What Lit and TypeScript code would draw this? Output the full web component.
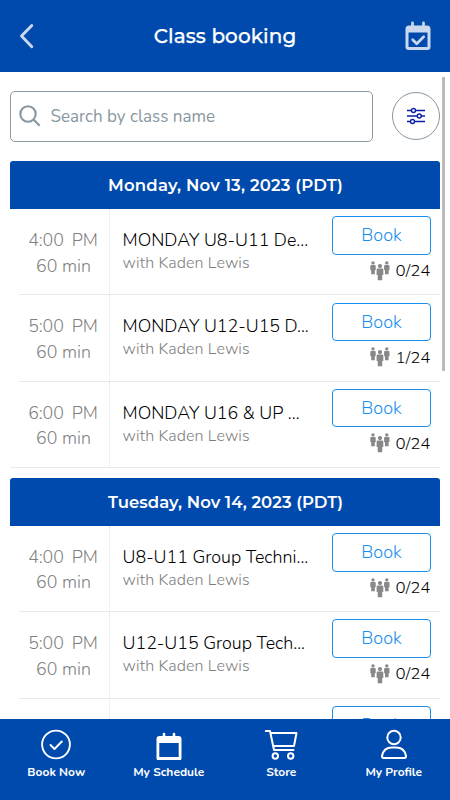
import { LitElement, html, css, svg, nothing } from "lit";
import { customElement } from "lit/decorators.js";

interface ClassSlot { time: string; name: string; spots: string }
interface Day { title: string; cls: string; slots: ClassSlot[]; more?: boolean }

const days: Day[] = [
  {
    title: "Monday, Nov 13, 2023 (PDT)",
    cls: "d1",
    slots: [
      { time: "4:00", name: "MONDAY U8-U11 De...", spots: "0/24" },
      { time: "5:00", name: "MONDAY U12-U15 D...", spots: "1/24" },
      { time: "6:00", name: "MONDAY U16 & UP ...", spots: "0/24" },
    ],
  },
  {
    title: "Tuesday, Nov 14, 2023 (PDT)",
    cls: "d2",
    slots: [
      { time: "4:00", name: "U8-U11 Group Techni...", spots: "0/24" },
      { time: "5:00", name: "U12-U15 Group Tech...", spots: "0/24" },
    ],
    more: true,
  },
];

const person = (x: number, y: number, s: number) => svg`
  <g transform="translate(${x} ${y}) scale(${s})">
    <circle cx="3" cy="1.9" r="1.9"></circle>
    <path d="M1 4.200h4q1 0 1 1v4.200q0 .6-.5.6T5 9.400V14.500H1V9.400q0 .6-.5.6T0 9.400V5.200q0-1 1-1z"></path>
  </g>`;

const people = html`<svg class="people" viewBox="0 0 20 20" width="20" height="20" fill="#888">
  ${person(0.3, 0.2, 0.9)}${person(14.1, 0.2, 0.9)}${person(6.6, 2.9, 1.12)}
</svg>`;

@customElement("app-root")
export class AppRoot extends LitElement {
  static styles = css`
    :host { display: flex; flex-direction: column; width: 450px; height: 800px; overflow: hidden; background: #fff; font-family: Nunito, "Open Sans", sans-serif; font-weight: 300; color: #111; }
    * { box-sizing: border-box; }
    svg { display: block; flex: none; }
    span, div { white-space: nowrap; }
    .top { height: 72px; flex: none; background: #004aad; display: flex; align-items: center; justify-content: space-between; padding: 0 18px 0 19px; }
    .title { font: 500 20px/24px Montserrat, Inter, sans-serif; color: #fff; letter-spacing: .08px; margin-left: 11px; -webkit-text-stroke: .25px #fff; }
    .main { flex: 1; min-height: 0; overflow: hidden; padding: 19px 10px 0; position: relative; }
    .thumb { position: absolute; left: 442px; top: 5px; width: 3px; height: 294px; background: #bbb; }
    .tools { display: flex; align-items: flex-start; justify-content: space-between; height: 51px; }
    .search { width: 363px; height: 50.500px; border: 1.500px solid #8b9ba4; border-radius: 5px; display: flex; align-items: center; padding-left: 8px; gap: 9.500px; color: #8796a0; font-size: 17px; font-weight: 400; }
    .ph { letter-spacing: .02px; padding-top: 1px; }
    .filter { width: 48px; height: 48px; margin-top: 1px; border: 1px solid #8796a0; border-radius: 50%; display: grid; place-items: center; }
    .day { margin-top: 19px; }
    .day + .day { margin-top: 10px; }
    .dayhead { height: 48px; background: #004aad; border-radius: 3px 3px 0 0; color: #fff; font: 600 16.500px/48px Montserrat, Inter, sans-serif; text-align: center; padding-left: 1px; }
    .d1 { letter-spacing: .19px; }
    .d2 { letter-spacing: .05px; }
    .row { height: 86.300px; display: grid; grid-template-columns: 100px 1fr 99px; padding-right: 9.500px; background: linear-gradient(#e4eaee, #e4eaee) 9px 85.400px / 422px 1px no-repeat; }
    .row:last-child { background-position: 0 85.400px; background-size: 430px 1px; }
    .when { color: #808080; font-size: 17.800px; line-height: 25.600px; padding: 19px 0 0 8px; text-align: center; border-right: 1px dotted #dfe3e7; }
    .clock { letter-spacing: -.1px; padding-right: 1px; }
    .pm { margin-left: 8px; }
    .info { padding: 19px 0 0 12.500px; min-width: 0; }
    .name { font-size: 17.850px; line-height: 25px; color: #000; }
    .coach { font-size: 16px; line-height: 20px; color: #808080; letter-spacing: .12px; }
    .side { padding-top: 7.300px; }
    .book { height: 38.500px; border: 1px solid #188eea; border-radius: 4px; color: #188eea; font-size: 18px; line-height: 37px; text-align: center; padding-left: 1px; }
    .spots { display: flex; justify-content: flex-end; align-items: center; gap: 6px; height: 30px; font-size: 16.900px; color: #000; margin-top: 1px; }
    .nav { height: 81px; flex: none; background: #004aad; display: grid; grid-template-columns: repeat(4, 1fr); color: #fff; padding-top: 9px; }
    .tab { display: flex; flex-direction: column; align-items: center; }
    .tab span { font-size: 12px; line-height: 16px; font-weight: 700; margin-top: 4px; }
  `;

  render() {
    return html`
      <div class="top">
        <svg width="16" height="26" viewBox="0 0 16 26" fill="none" stroke="#cbd9ee" stroke-width="2.900" stroke-linecap="round" stroke-linejoin="round"><path d="M12.800 2.500 2.500 13 12.800 23.700"></path></svg>
        <span class="title">Class booking</span>
        <svg width="28" height="31" viewBox="0 0 28 31" fill="#cbd9ee"><path fill-rule="evenodd" d="M5 4.500h18q3.500 0 3.500 3.500v18q0 3-3 3h-19q-3 0-3-3v-18Q1.500 4.500 5 4.500zM4.500 11.500v14.500h19V11.500z"></path><path fill="none" stroke="#cbd9ee" stroke-width="2.700" stroke-linecap="round" stroke-linejoin="round" d="M8.500 1.800v4M19.500 1.800v4M8.700 18.800l4 4 7-7"></path></svg>
      </div>
      <div class="main">
        <div class="tools">
          <div class="search">
            <svg width="22" height="22" viewBox="0 0 22 22" fill="none" stroke="#8796a0" stroke-width="2.100"><circle cx="9" cy="9" r="7.700"></circle><path d="m14.500 14.500 6.200 6.200"></path></svg>
            <span class="ph">Search by class name</span>
          </div>
          <div class="filter">
            <svg width="18" height="18" viewBox="0 0 18 18" fill="#fff" stroke="#0b1fa8" stroke-width="1.400"><path d="M0 3.500h18M0 9h18M0 14.500h18"></path><circle cx="6.500" cy="3.500" r="2"></circle><circle cx="12.300" cy="9" r="2"></circle><circle cx="5.500" cy="14.500" r="2"></circle></svg>
          </div>
        </div>
        ${days.map((d) => html`
          <div class="day">
            <div class="dayhead"><span class=${d.cls}>${d.title}</span></div>
            ${d.slots.map((s) => html`
              <div class="row">
                <div class="when"><div class="clock"><span>${s.time}</span><span class="pm">PM</span></div><div>60 min</div></div>
                <div class="info"><div class="name">${s.name}</div><div class="coach">with Kaden Lewis</div></div>
                <div class="side"><div class="book">Book</div><div class="spots">${people}<span>${s.spots}</span></div></div>
              </div>`)}
            ${d.more ? html`<div class="row"><div class="when"></div><div class="info"></div><div class="side"><div class="book">Book</div></div></div>` : nothing}
          </div>`)}
        <div class="thumb"></div>
      </div>
      <div class="nav">
        <div class="tab"><svg width="32" height="32" viewBox="0 0 32 32" fill="none" stroke="#fff" stroke-width="1.900" stroke-linecap="round" stroke-linejoin="round"><circle cx="16" cy="16.500" r="13.900"></circle><path d="m10.500 17 4 4 7.300-7.500"></path></svg><span>Book Now</span></div>
        <div class="tab"><svg width="32" height="32" viewBox="0 0 32 32" fill="#fff"><path fill-rule="evenodd" d="M6.500 8h19q3 0 3 3v19q0 2.500-2.500 2.500H6q-2.500 0-2.500-2.500v-19q0-3 3-3zM6.300 15v14h19.400v-14z"></path><path stroke="#fff" stroke-width="2.600" stroke-linecap="round" d="M11 6v4M21 6v4"></path></svg><span>My Schedule</span></div>
        <div class="tab"><svg width="34" height="32" viewBox="0 0 34 32" fill="none" stroke="#fff" stroke-width="2" stroke-linecap="round" stroke-linejoin="round"><path d="M1.800 3h4.200l4 19H29.500M6.500 5h26l-2.500 13H9.200"></path><circle cx="11.300" cy="28" r="2.700"></circle><circle cx="26.700" cy="28" r="2.700"></circle></svg><span>Store</span></div>
        <div class="tab"><svg width="32" height="32" viewBox="0 0 32 32" fill="none" stroke="#fff" stroke-width="2" stroke-linejoin="round"><circle cx="16" cy="9.500" r="6.700"></circle><path d="M5.500 30Q4 30 4 28q1.500-8.500 10-8.500h4q8.500 0 10 8.500 0 2-1.500 2z"></path></svg><span>My Profile</span></div>
      </div>`;
  }
}
